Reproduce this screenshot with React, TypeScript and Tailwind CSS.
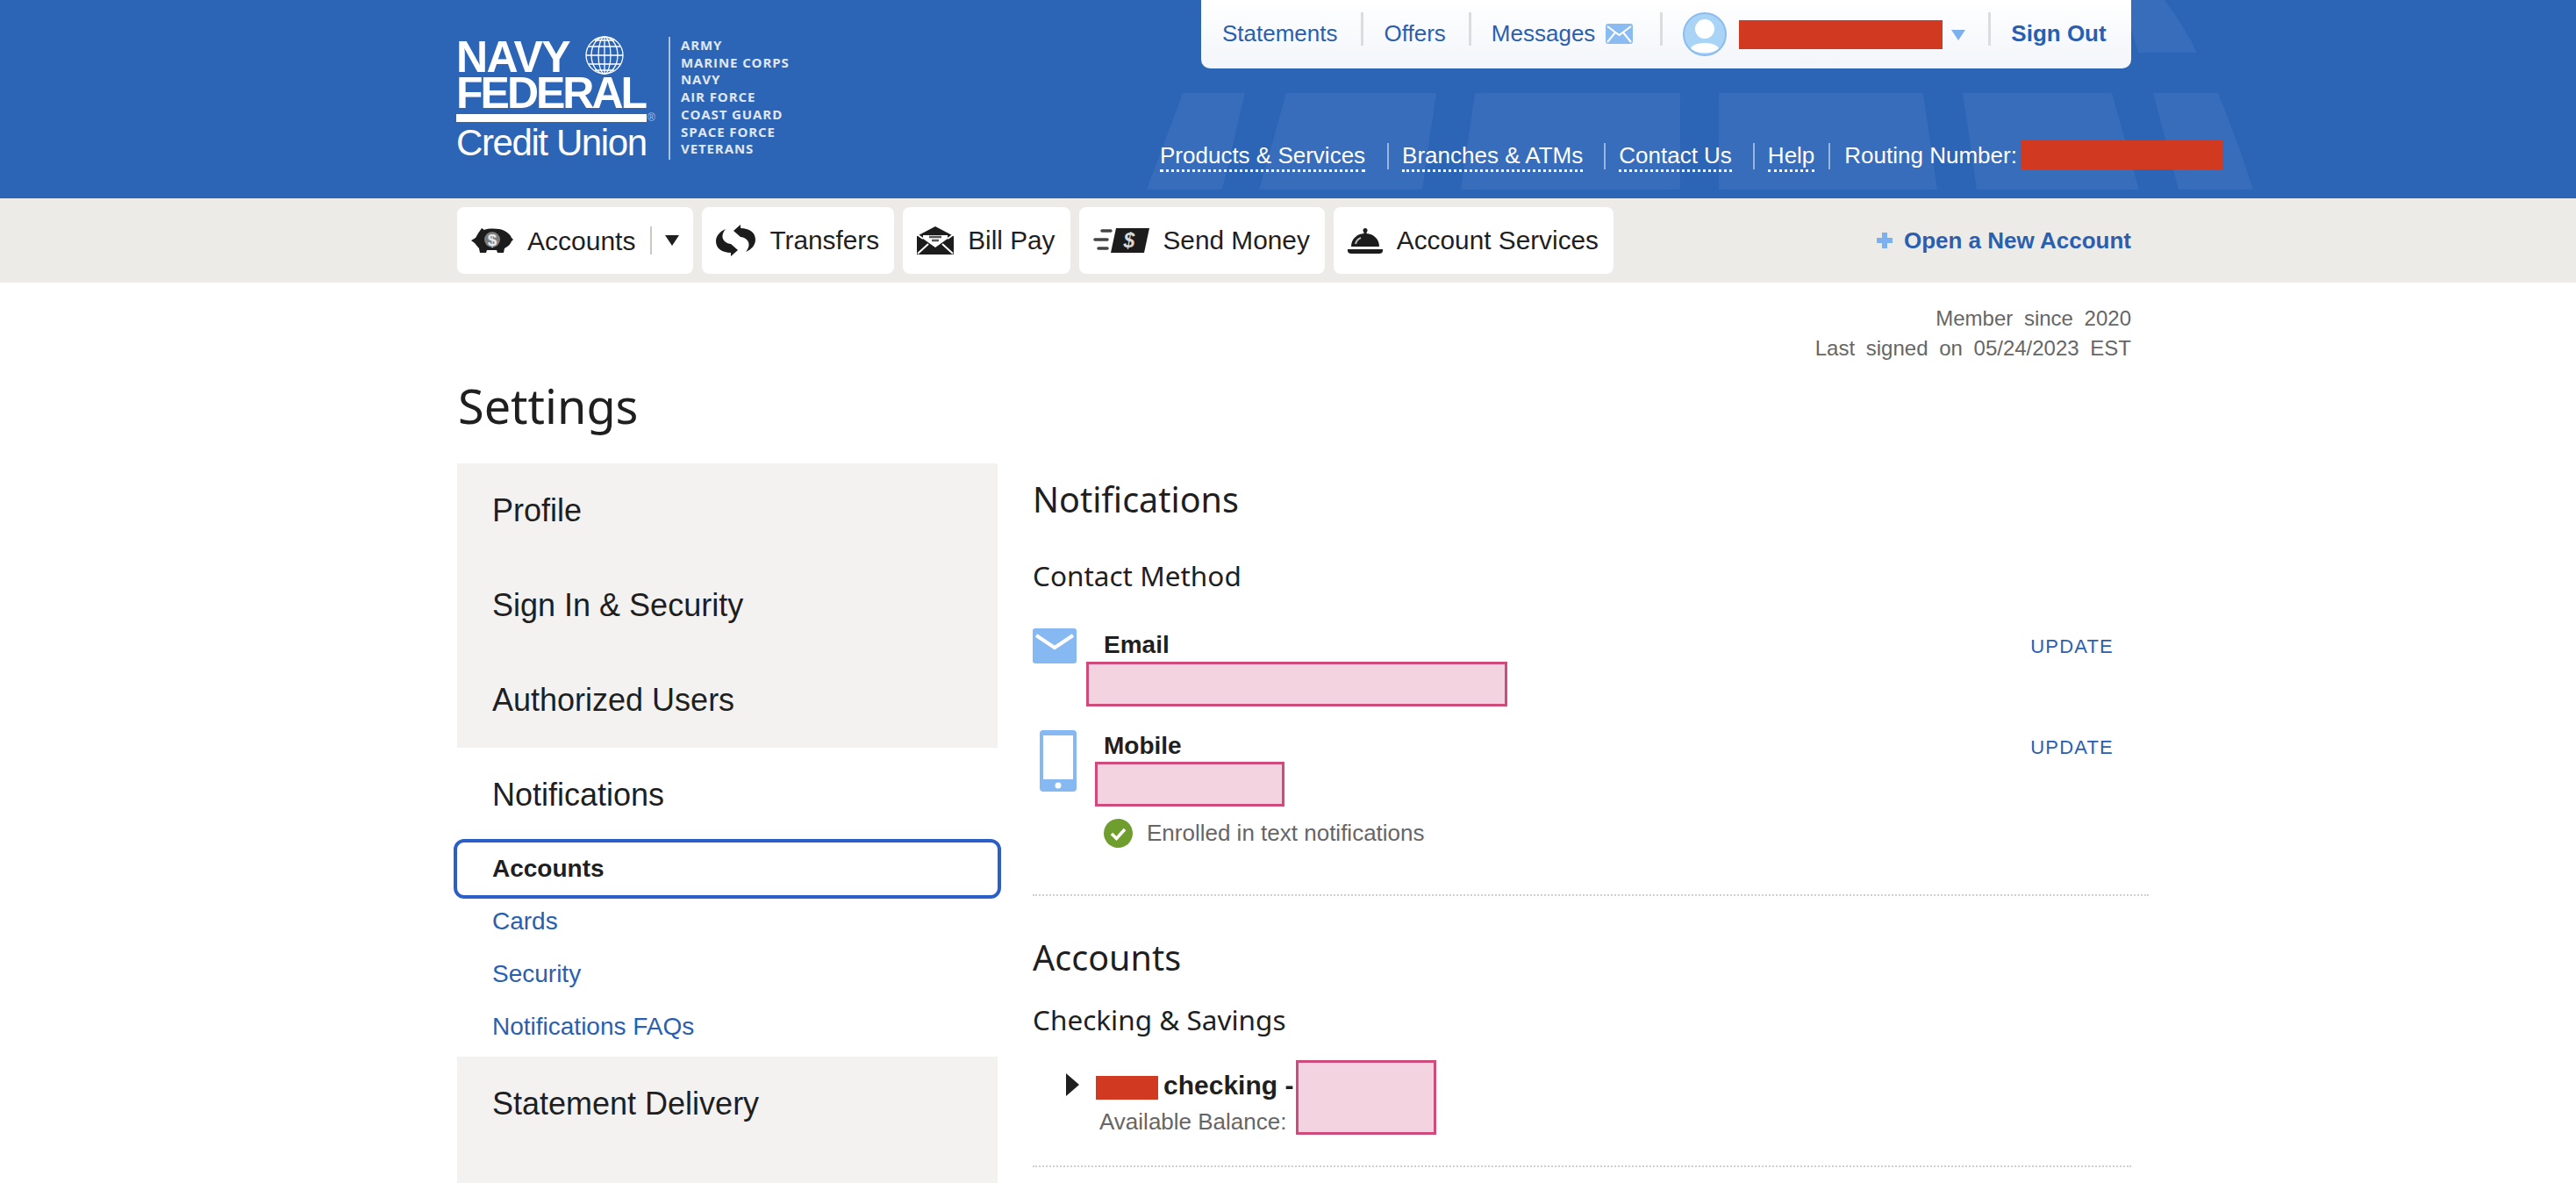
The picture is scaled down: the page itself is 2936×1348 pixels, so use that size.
import React from 'react';

const serviceBranches = ['ARMY', 'MARINE CORPS', 'NAVY', 'AIR FORCE', 'COAST GUARD', 'SPACE FORCE', 'VETERANS'];

const PiggyIcon = () => (
  <svg width="48" height="28" viewBox="0 0 48 28" fill="#1c1c1c">
    <path d="M0 14 L5 11 C7 8 8 5 10 3 L12 0 L15 2 C20 0 32 0 38 3 C42 5 45 8 46 11 L48 13 L46 15 C45 18 42 21 38 23 L37 28 L30 28 L29 25 L18 25 L17 28 L10 28 L9 23 C7 21 5 18 4 17 Z" />
    <circle cx="24" cy="13" r="9" fill="#7d7d7d" />
    <text x="24" y="20" textAnchor="middle" fontSize="19" fontWeight="700" fill="#e8e8e8" fontFamily="Liberation Sans, sans-serif">$</text>
  </svg>
);

const TransferIcon = () => {
  const arrow = 'M20 7 L28 0 L28 4 C38 4 45 9 45 17 C45 23 41 28 34 31 C38 26 39 21 35 17 C33 15 30 14 28 14 Z';
  return (
    <svg width="45" height="36" viewBox="0 0 45 36" fill="#1c1c1c">
      <path d={arrow} />
      <path d={arrow} transform="rotate(180 22.5 18)" />
    </svg>
  );
};

const BillIcon = () => (
  <svg width="42" height="32" viewBox="0 0 42 32">
    <path d="M0 11 L21 0 L42 11 L42 32 L0 32 Z" fill="#1c1c1c" />
    <path d="M7 10 L35 10 L35 14 L21 24 L7 14 Z" fill="#fff" />
    <path d="M14 12 L28 12 M17 16 L25 16" stroke="#555" strokeWidth="2.5" />
    <path d="M1 31 L13 20 M41 31 L29 20 M0 9 L7 14 M42 9 L35 14" stroke="#fff" strokeWidth="2" />
  </svg>
);

const MoneyIcon = () => (
  <svg width="64" height="28" viewBox="0 0 64 28">
    <path d="M26 0 L64 0 L58 28 L20 28 Z" fill="#1c1c1c" />
    <text x="41" y="22" textAnchor="middle" fontSize="23" fontWeight="700" fontStyle="italic" fill="#d8d8d8" fontFamily="Liberation Sans, sans-serif">$</text>
    <path d="M10 3 L20 3" stroke="#444" strokeWidth="3.5" strokeLinecap="round" />
    <path d="M2 13 L16 13" stroke="#444" strokeWidth="3.5" strokeLinecap="round" />
    <path d="M6 23 L16 23" stroke="#444" strokeWidth="3.5" strokeLinecap="round" />
  </svg>
);

const BellIcon = () => (
  <svg width="40" height="29" viewBox="0 0 40 29" fill="#1c1c1c">
    <circle cx="20" cy="2.5" r="2.5" />
    <rect x="18.5" y="3" width="3" height="4" />
    <path d="M4 21 C4 12 11 6 20 6 C29 6 36 12 36 21 Z" />
    <path d="M0 24 L40 24 L40 26 C40 28 38 29 36 29 L4 29 C2 29 0 28 0 26 Z" />
    <path d="M9 18 C10 14 12 12 15 11" stroke="#bdbdbd" strokeWidth="2" fill="none" />
  </svg>
);

const Globe = () => (
  <svg width="44" height="44" viewBox="0 0 44 44" fill="none" stroke="#fff" strokeWidth="1.3">
    <circle cx="22" cy="22" r="21" />
    <ellipse cx="22" cy="22" rx="7" ry="21" />
    <ellipse cx="22" cy="22" rx="15" ry="21" />
    <path d="M22 1 L22 43 M1 22 L43 22 M4 12 L40 12 M4 32 L40 32 M11 5 L33 5 M11 39 L33 39" />
  </svg>
);

const Avatar = () => (
  <svg width="50" height="50" viewBox="0 0 50 50">
    <circle cx="25" cy="25" r="24" fill="#a9d4f6" stroke="#8cbcf0" strokeWidth="2" />
    <circle cx="25" cy="19" r="11" fill="#fff" />
    <path d="M9 41 C13 33 37 33 41 41 C35 48 15 48 9 41 Z" fill="#fff" />
  </svg>
);

const Divider = () => <div className="h-[38px] w-[3px] bg-[#dcdcdc]" />;

const LinkSep = () => <div className="h-[30px] w-[2px] bg-white/50" />;

const Redacted = ({ className }: { className: string }) => (
  <div className={`border-[3px] border-[#d14a7c] bg-[#f4d3e0] ${className}`} />
);

const NavButton = ({ icon, label }: { icon: React.ReactNode; label: string }) => (
  <button className="flex h-[76px] items-center gap-4 rounded-lg bg-white pl-4 pr-[17px] text-[29.8px] text-[#1f1f1f]">
    {icon}
    <span>{label}</span>
  </button>
);

const SideHeading = ({ label }: { label: string }) => (
  <div className="flex h-[108px] items-center pl-10 text-[36px] text-[#1f1f1f]">{label}</div>
);

const SideLink = ({ label }: { label: string }) => (
  <div className="flex h-[60px] items-center pl-10 text-[28px] text-[#2a5fb0]">{label}</div>
);

export default function App() {
  return (
    <div className="h-[1348px] overflow-hidden bg-white font-['Liberation_Sans',Arial,sans-serif]">
      {/* Blue header */}
      <header className="relative h-[226px] bg-[#2c65b5]">
        <svg className="absolute inset-0" width="2936" height="226" viewBox="0 0 2936 226" fill="#376dba">
          <path d="M1348 106 L1419 106 L1393 216 L1307 216 Z" />
          <path d="M1466 106 L1637 106 L1621 216 L1435 216 Z" />
          <path d="M1681 106 L1915 106 L1915 216 L1665 216 Z" />
          <path d="M1959 106 L2192 106 L2208 216 L1959 216 Z" />
          <path d="M2237 106 L2407 106 L2438 216 L2253 216 Z" />
          <path d="M2454 106 L2528 106 C2546 150 2558 185 2568 216 L2483 216 Z" />
          <path d="M2420 0 L2467 0 C2482 20 2494 40 2504 60 L2437 60 Z" />
        </svg>

        <div className="relative ml-[521px] flex w-[1908px]">
          {/* Logo */}
          <div className="flex w-[801px] shrink-0 pt-[42px] text-white">
            <div className="relative -ml-px h-[140px] w-[242px] font-bold">
              <div className="flex h-[46px] items-center">
                <span className="text-[50px] leading-none tracking-[-1.5px]">NAVY</span>
                <span className="-mt-[4px] ml-[18px]"><Globe /></span>
              </div>
              <div className="text-[50px] leading-[36px] tracking-[-3px]">FEDERAL</div>
              <div className="mt-[6px] h-[9px] w-[217px] bg-white" />
              <div className="mt-[3px] text-[42px] font-normal leading-[42px] tracking-[-1.4px]">Credit Union</div>
              <span className="absolute left-[218px] top-[86px] text-[12px] font-normal leading-none text-white/60">®</span>
            </div>
            <div className="h-[140px] w-[2px] bg-white/60" />
            <div className="ml-[12px] flex flex-col font-['Open_Sans',sans-serif] text-[15px] font-bold leading-[19.7px] tracking-[0.9px] whitespace-nowrap text-white/85">
              {serviceBranches.map((branch) => (
                <span key={branch}>{branch}</span>
              ))}
            </div>
          </div>

          <div className="flex shrink-0 flex-col whitespace-nowrap">
            {/* Utility panel */}
            <div className="ml-[47px] flex h-[78px] w-[1060px] items-start rounded-b-[10px] bg-gradient-to-b from-white to-[#f2f5fa] pl-6 text-[26px] text-[#2a5fb0]">
              <span className="mt-[19px]">Statements</span>
              <div className="ml-[26px] mt-[14px]"><Divider /></div>
              <span className="ml-[24px] mt-[19px]">Offers</span>
              <div className="ml-[26px] mt-[14px]"><Divider /></div>
              <span className="ml-[23px] mt-[19px]">Messages</span>
              <svg className="ml-3 mt-[27px]" width="31" height="23" viewBox="0 0 31 23">
                <rect width="31" height="23" rx="3" fill="#8abcf3" />
                <path d="M2 3 L15.5 13 L29 3 M2 21 L11 10 M29 21 L20 10" stroke="#fff" strokeWidth="2" fill="none" />
              </svg>
              <div className="ml-[31px] mt-[14px]"><Divider /></div>
              <span className="ml-[23px] mt-[14px]"><Avatar /></span>
              <div className="ml-[14px] mt-[23px] h-[33px] w-[232px] bg-[#d13a20]" />
              <svg className="ml-[10px] mt-[34px]" width="16" height="12" viewBox="0 0 16 12">
                <path d="M0 0 L16 0 L8 12 Z" fill="#7db0ee" />
              </svg>
              <div className="ml-[26px] mt-[14px]"><Divider /></div>
              <span className="ml-[23px] mt-[19px] font-bold">Sign Out</span>
            </div>

            {/* Secondary links */}
            <div className="mt-[83px] flex h-[34px] w-[1215px] items-start text-[26px] leading-[32px] text-white">
              <a className="border-b-[3px] border-dotted border-white">Products &amp; Services</a>
              <div className="ml-[25px] mr-[15px] mt-[2px]"><LinkSep /></div>
              <a className="border-b-[3px] border-dotted border-white">Branches &amp; ATMs</a>
              <div className="ml-[24px] mr-[15px] mt-[2px]"><LinkSep /></div>
              <a className="border-b-[3px] border-dotted border-white">Contact Us</a>
              <div className="ml-[24px] mr-[15px] mt-[2px]"><LinkSep /></div>
              <a className="border-b-[3px] border-dotted border-white">Help</a>
              <div className="mx-[16px] mt-[2px]"><LinkSep /></div>
              <span>Routing Number:</span>
              <div className="-mt-[1px] ml-[4px] h-[33px] w-[231px] bg-[#d13a20]" />
            </div>
          </div>
        </div>
      </header>

      {/* Main nav */}
      <nav className="h-[96px] bg-[#edebe7]">
        <div className="ml-[521px] flex h-full w-[1908px] items-center justify-between">
          <div className="flex gap-[10px]">
            <div className="flex h-[76px] items-center rounded-lg bg-white pl-4 text-[30px] text-[#1f1f1f]">
              <PiggyIcon />
              <span className="ml-4">Accounts</span>
              <div className="ml-[17px] h-[32px] w-[2px] bg-[#c9c8c3]" />
              <svg className="ml-[15px] mr-4" width="16" height="12" viewBox="0 0 16 12">
                <path d="M0 0 L16 0 L8 12 Z" fill="#1f1f1f" />
              </svg>
            </div>
            <NavButton icon={<TransferIcon />} label="Transfers" />
            <NavButton icon={<BillIcon />} label="Bill Pay" />
            <NavButton icon={<MoneyIcon />} label="Send Money" />
            <NavButton icon={<BellIcon />} label="Account Services" />
          </div>
          <div className="flex items-center text-[26px] font-bold text-[#2a5fb0]">
            <svg className="mr-[13px]" width="18" height="18" viewBox="0 0 18 18" fill="#7db0ee">
              <path d="M6 0 H12 V6 H18 V12 H12 V18 H6 V12 H0 V6 H6 Z" />
            </svg>
            Open a New Account
          </div>
        </div>
      </nav>

      <main className="ml-[521px] w-[1928px]">
        <div className="w-[1908px] pt-[24px] text-right text-[24px] leading-[34px] text-[#666] [word-spacing:6px]">
          <div>Member since 2020</div>
          <div>Last signed on 05/24/2023 EST</div>
        </div>

        <h1 className="mt-[10px] h-[104px] pl-px font-['Noto_Sans',sans-serif] text-[54px] leading-[76px] text-[#1f1f1f]">Settings</h1>

        <div className="flex">
          {/* Settings sidebar */}
          <aside className="w-[616px] shrink-0">
            <div className="bg-[#f3f2f0]">
              <SideHeading label="Profile" />
              <SideHeading label="Sign In & Security" />
              <SideHeading label="Authorized Users" />
            </div>
            <SideHeading label="Notifications" />
            <div className="flex h-[60px] items-center rounded-lg pl-10 text-[28px] font-bold text-[#1f1f1f] outline-[4px] outline-[#2b5fc7]">Accounts</div>
            <SideLink label="Cards" />
            <SideLink label="Security" />
            <SideLink label="Notifications FAQs" />
            <div className="mt-1 h-[200px] bg-[#f3f2f0]">
              <SideHeading label="Statement Delivery" />
            </div>
          </aside>

          {/* Notifications content */}
          <section className="ml-[40px] w-[1272px] text-[#1f1f1f]">
            <h2 className="flex h-[84px] items-center font-['Noto_Sans',sans-serif] text-[39.5px]">Notifications</h2>
            <h3 className="flex h-[88px] items-center font-['Noto_Sans',sans-serif] text-[31.5px]">Contact Method</h3>

            <div className="flex h-[132px] pt-4">
              <svg width="50" height="40" viewBox="0 0 50 40">
                <rect width="50" height="40" rx="3" fill="#86b8f2" />
                <path d="M4 8 L25 22 L46 8" stroke="#fff" strokeWidth="4" fill="none" />
              </svg>
              <div className="ml-[31px] flex-1">
                <div className="flex h-[38px] items-center justify-between pr-[40px]">
                  <span className="text-[28px] font-bold">Email</span>
                  <span className="mt-[2px] text-[22px] tracking-[1.2px] text-[#2a5fb0]">UPDATE</span>
                </div>
                <Redacted className="-ml-5 h-[51px] w-[480px]" />
              </div>
            </div>

            <div className="flex h-[187px]">
              <svg className="ml-2" width="42" height="70" viewBox="0 0 42 70">
                <rect width="42" height="70" rx="4" fill="#86b8f2" />
                <rect x="4" y="6" width="34" height="50" fill="#fff" />
                <circle cx="21" cy="63" r="3.5" fill="#fff" />
              </svg>
              <div className="ml-[31px] flex-1">
                <div className="flex h-[36px] items-center justify-between pr-[40px]">
                  <span className="text-[28px] font-bold">Mobile</span>
                  <span className="mt-[2px] text-[22px] tracking-[1.2px] text-[#2a5fb0]">UPDATE</span>
                </div>
                <Redacted className="-ml-[10px] h-[51px] w-[216px]" />
                <div className="mt-[11px] flex items-center text-[26px] text-[#666]">
                  <svg width="33" height="33" viewBox="0 0 33 33">
                    <circle cx="16.5" cy="16.5" r="16.5" fill="#6f9e2e" />
                    <path d="M9 17 L14.5 22.5 L24 12" stroke="#fff" strokeWidth="3.5" fill="none" />
                  </svg>
                  <span className="ml-4">Enrolled in text notifications</span>
                </div>
              </div>
            </div>

            <div className="border-t-2 border-dotted border-[#cfcfcf]" />

            <h2 className="flex h-[109px] items-center pt-[33px] font-['Noto_Sans',sans-serif] text-[39.5px] leading-none">Accounts</h2>
            <h3 className="flex h-[63px] items-center font-['Noto_Sans',sans-serif] text-[31.5px]">Checking &amp; Savings</h3>

            <div className="flex h-[135px] pl-[38px] pt-[12px]">
              <svg className="mt-[18px]" width="15" height="26" viewBox="0 0 15 26">
                <path d="M0 0 L15 13 L0 26 Z" fill="#1f1f1f" />
              </svg>
              <div className="ml-[23px] w-[213px]">
                <div className="flex h-[58px] items-start whitespace-nowrap">
                  <div className="-ml-[4px] mt-[21px] h-[27px] w-[71px] shrink-0 bg-[#d13a20]" />
                  <span className="ml-[6px] mt-[14px] text-[30px] font-bold leading-[36px]">checking -</span>
                </div>
                <div className="whitespace-nowrap text-[26px] leading-[30px] text-[#666]">Available Balance:</div>
              </div>
              <Redacted className="ml-[11px] mt-[3px] h-[85px] w-[160px]" />
            </div>

            <div className="w-[1252px] border-t-2 border-dotted border-[#cfcfcf]" />
          </section>
        </div>
      </main>
    </div>
  );
}
